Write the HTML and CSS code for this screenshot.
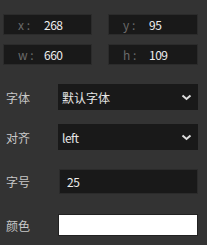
FILE: index.html
```html
<!DOCTYPE html>
<html>
    <head>
        <meta charset="UTF-8">
        <link rel="stylesheet" href="styles.css">
    </head>
    <body>
        <div class="panel">
            <!-- 位置和尺寸 -->
            <div class="coords">
                <div class="coord"><span class="coord_key">x :</span><span class="coord_val">268</span></div>
                <div class="coord"><span class="coord_key">y :</span><span class="coord_val">95</span></div>
                <div class="coord"><span class="coord_key">w :</span><span class="coord_val">660</span></div>
                <div class="coord"><span class="coord_key">h :</span><span class="coord_val">109</span></div>
            </div>

            <!-- 文字属性 -->
            <div class="row" id="row_font">
                <label class="row_label">字体</label>
                <div class="select">
                    <span>默认字体</span>
                    <svg width="11" height="7" viewBox="0 0 11 7"><path d="M1.5 1.5 L5.5 5 L9.5 1.5" fill="none" stroke="#ddd" stroke-width="2"/></svg>
                </div>
            </div>
            <div class="row" id="row_align">
                <label class="row_label">对齐</label>
                <div class="select">
                    <span class="latin">left</span>
                    <svg width="11" height="7" viewBox="0 0 11 7"><path d="M1.5 1.5 L5.5 5 L9.5 1.5" fill="none" stroke="#ddd" stroke-width="2"/></svg>
                </div>
            </div>
            <div class="row" id="row_size">
                <label class="row_label">字号</label>
                <input class="size_input" type="text" value="25">
            </div>
            <div class="row" id="row_color">
                <label class="row_label">颜色</label>
                <div class="color_box"></div>
            </div>
        </div>
    </body>
</html>
```

FILE: styles.css
```css
body{
    margin: 0;
    background-color: #333333;
    font-family: "Noto Sans CJK SC", sans-serif;
    font-size: 12px;
}

.panel{
    width: 195px;
    padding: 14px 0 0 3px;
}

.coords{
    display: grid;
    grid-template-columns: 89px 90px;
    column-gap: 16px;
    row-gap: 9px;
}

.coord{
    height: 21px;
    display: flex;
    align-items: center;
    padding-left: 14px;
    background-color: #191919;
    border: 1px solid #2b2b2b;
    box-sizing: border-box;
}

.coord_key{
    width: 26px;
    color: #6a6a6a;
}

.coord_val{
    color: #eeeeee;
    letter-spacing: -0.5px;
}

.latin{ letter-spacing: -0.5px;}

/* 以下为属性行 */
.row{
    display: flex;
    align-items: center;
}

.row_label{
    width: 52px;
    padding-left: 3px;
    color: #c8c8c8;
}

#row_font{ margin-top: 19px; height: 26px;}
#row_align{ margin-top: 14px; height: 26px;}
#row_size{ margin-top: 19px; height: 25px;}
#row_color{ margin-top: 20px; height: 22px;}

.select{
    width: 140px;
    height: 26px;
    display: flex;
    align-items: center;
    justify-content: space-between;
    padding: 0 6px 0 4px;
    box-sizing: border-box;
    background-color: #191919;
    color: #e6e6e6;
}

.size_input{
    width: 139px;
    height: 25px;
    margin: 0 0 0 1px;
    padding: 0 0 0 7px;
    box-sizing: border-box;
    background-color: #191919;
    border: 1px solid #2b2b2b;
    color: #eeeeee;
    font-family: "Noto Sans CJK SC", sans-serif;
    font-size: 12px;
    letter-spacing: -0.5px;
    outline: none;
}

.color_box{
    width: 140px;
    height: 22px;
    box-sizing: border-box;
    background-color: #ffffff;
    border: 1px solid #222222;
}
```
